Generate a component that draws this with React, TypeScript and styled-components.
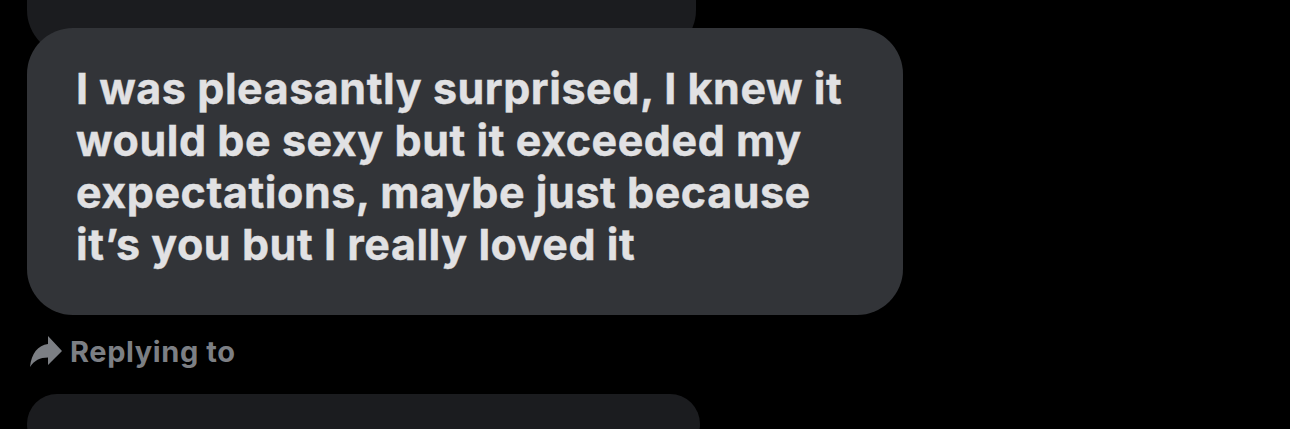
import React from "react";
import styled, { createGlobalStyle } from "styled-components";

const Global = createGlobalStyle`
  html, body {
    margin: 0;
    background: #000;
    overflow: hidden;
  }
`;

const Thread = styled.div`
  display: flex;
  flex-direction: column;
  align-items: flex-start;
  padding-left: 27px;
  height: 429px;
  overflow: hidden;
  font-family: Inter, "Noto Sans", sans-serif;
`;

const Bubble = styled.div<{ $tone: "dim" | "main"; $w: number }>`
  width: ${(p) => p.$w}px;
  box-sizing: border-box;
  border-radius: 46px;
  background: ${(p) => (p.$tone === "main" ? "#323438" : "#1b1c1f")};
  flex-shrink: 0;
`;

const PrevBubble = styled(Bubble)`
  height: 56px;
  border-top-left-radius: 0;
  border-top-right-radius: 0;
`;

const MainBubble = styled(Bubble)`
  margin-top: -28px;
  position: relative;
  padding: 34px 40px 0 49px;
  height: 287px;
  color: #e1e1e3;
  font-size: 43px;
  font-weight: 700;
  line-height: 52px;
  letter-spacing: 0.55px;
  -webkit-text-stroke: 0.4px #e1e1e3;
`;

const NextBubble = styled(Bubble)`
  height: 60px;
  margin-top: 25px;
`;

const ReplyRow = styled.div`
  display: flex;
  align-items: center;
  gap: 8px;
  margin-top: 19px;
  padding-left: 3px;
  color: #7c7f84;
  font-size: 29px;
  font-weight: 700;
  letter-spacing: 0.6px;
  height: 36px;
`;

const ReplyIcon = () => (
  <svg width="32" height="32" viewBox="0 0 32 32">
    <path
      d="M32 15 L18 0 L18 8 C8 9.5 1.5 17 0 31 C4 24.5 10 21.5 18 21.5 L18 29 Z"
      fill="#7c7f84"
    />
  </svg>
);

export default function App() {
  return (
    <>
      <Global />
      <Thread>
        <PrevBubble $tone="dim" $w={669} />
        <MainBubble $tone="main" $w={876}>
          I was pleasantly surprised, I knew it would be sexy but it exceeded my
          expectations, maybe just because it’s you but I really loved it
        </MainBubble>
        <ReplyRow>
          <ReplyIcon />
          Replying to
        </ReplyRow>
        <NextBubble $tone="dim" $w={673} />
      </Thread>
    </>
  );
}
